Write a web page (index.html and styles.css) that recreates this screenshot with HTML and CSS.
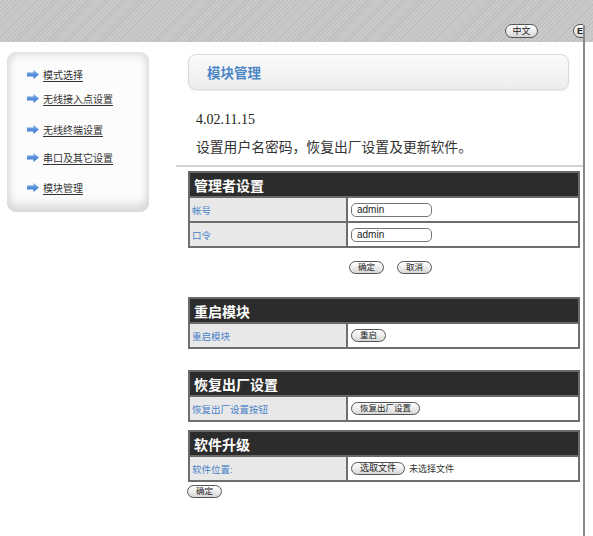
FILE: index.html
```html
<!DOCTYPE html>
<html lang="zh-CN">
<head>
<meta charset="utf-8">
<title>模块管理</title>
<link rel="stylesheet" href="styles.css">
</head>
<body>
<div class="page">
  <header class="topbar">
    <div class="langs">
      <button class="pill lang">中文</button>
      <button class="pill lang wide">En</button>
    </div>
  </header>
  <div class="layout">
    <aside class="side">
      <svg class="defs" width="0" height="0" aria-hidden="true">
        <defs>
          <linearGradient id="arrowGrad" x1="0" y1="0" x2="0" y2="1">
            <stop offset="0" stop-color="#86b6ee"/>
            <stop offset="1" stop-color="#2c6cc8"/>
          </linearGradient>
        </defs>
      </svg>
      <nav class="sidebox">
        <a class="navlink n1" href="#"><svg class="arrow" width="12" height="9" viewBox="0 0 12 9"><path d="M0 2.5H6.5V0L12 4.5 6.5 9V6.5H0Z" fill="url(#arrowGrad)"/></svg><span>模式选择</span></a>
        <a class="navlink n2" href="#"><svg class="arrow" width="12" height="9" viewBox="0 0 12 9"><path d="M0 2.5H6.5V0L12 4.5 6.5 9V6.5H0Z" fill="url(#arrowGrad)"/></svg><span>无线接入点设置</span></a>
        <a class="navlink n3" href="#"><svg class="arrow" width="12" height="9" viewBox="0 0 12 9"><path d="M0 2.5H6.5V0L12 4.5 6.5 9V6.5H0Z" fill="url(#arrowGrad)"/></svg><span>无线终端设置</span></a>
        <a class="navlink n4" href="#"><svg class="arrow" width="12" height="9" viewBox="0 0 12 9"><path d="M0 2.5H6.5V0L12 4.5 6.5 9V6.5H0Z" fill="url(#arrowGrad)"/></svg><span>串口及其它设置</span></a>
        <a class="navlink n5" href="#"><svg class="arrow" width="12" height="9" viewBox="0 0 12 9"><path d="M0 2.5H6.5V0L12 4.5 6.5 9V6.5H0Z" fill="url(#arrowGrad)"/></svg><span>模块管理</span></a>
      </nav>
    </aside>
    <main class="main">
      <div class="titlebox">模块管理</div>
      <p class="version">4.02.11.15</p>
      <p class="desc">设置用户名密码，恢复出厂设置及更新软件。</p>
      <hr class="sep">

      <table class="cfg first">
        <tr><th colspan="2">管理者设置</th></tr>
        <tr><td class="lbl">帐号</td><td class="val"><input class="txt" type="text" value="admin"></td></tr>
        <tr><td class="lbl">口令</td><td class="val"><input class="txt" type="text" value="admin"></td></tr>
      </table>
      <div class="actions">
        <button class="pill">确定</button>
        <button class="pill">取消</button>
      </div>

      <table class="cfg reboot">
        <tr><th colspan="2">重启模块</th></tr>
        <tr><td class="lbl">重启模块</td><td class="val"><button class="pill">重启</button></td></tr>
      </table>

      <table class="cfg factory">
        <tr><th colspan="2">恢复出厂设置</th></tr>
        <tr><td class="lbl">恢复出厂设置按钮</td><td class="val"><button class="pill">恢复出厂设置</button></td></tr>
      </table>

      <table class="cfg upgrade">
        <tr><th colspan="2">软件升级</th></tr>
        <tr><td class="lbl">软件位置:</td><td class="val"><span class="file"><button class="pill filebtn">选取文件</button><span class="nofile">未选择文件</span></span></td></tr>
      </table>
      <div class="actions left">
        <button class="pill">确定</button>
      </div>
    </main>
  </div>
  <div class="frame-line"></div>
</div>
</body>
</html>
```

FILE: styles.css
```css
html, body {
  margin: 0;
  padding: 0;
}

body {
  font-family: "Liberation Sans", "Noto Sans CJK SC", sans-serif;
  color: #333;
  background: #fff;
  overflow: hidden;
}

.page {
  position: relative;
  width: 593px;
  height: 536px;
  overflow: hidden;
}

.topbar {
  height: 42px;
  box-sizing: border-box;
  padding: 24px 10px 0 0;
  display: flex;
  justify-content: flex-end;
  align-items: flex-start;
  background-color: #c6c6c6;
  background-image: repeating-linear-gradient(135deg, #cacaca 0 2px, #bdbdbd 2px 3px);
}

.langs {
  display: flex;
  gap: 35px;
  width: 78px;
  overflow: hidden;
}

.pill {
  margin: 0;
  height: 13px;
  box-sizing: border-box;
  padding: 0 8px;
  border: 1px solid #555;
  border-radius: 7px;
  background: linear-gradient(#ffffff, #e9e9e9 60%, #d6d6d6);
  font-family: "Liberation Sans", "Noto Sans CJK SC", sans-serif;
  font-size: 8.5px;
  line-height: 11px;
  color: #222;
  white-space: nowrap;
  flex: none;
  cursor: pointer;
}

.lang {
  width: 33px;
  height: 14px;
  padding: 0;
  text-align: center;
  font-size: 9px;
  line-height: 12px;
}

.lang.wide {
  width: 33px;
  padding: 0 0 0 3px;
  text-align: left;
  font-weight: bold;
}

.layout {
  display: grid;
  grid-template-columns: 176px 1fr;
}

.side {
  padding: 10px 0 0 7px;
}

.defs {
  position: absolute;
}

.sidebox {
  width: 142px;
  height: 160px;
  box-sizing: border-box;
  border-radius: 9px;
  background: #fcfcfc;
  box-shadow: inset 0 0 9px 2px #d6d6d6, inset 0 -12px 10px -4px #e0e0e0;
  padding: 9px 0 0 20px;
  display: flex;
  flex-direction: column;
}

.navlink {
  display: flex;
  align-items: center;
  gap: 4px;
  height: 26px;
  font-size: 10px;
  color: #333;
  text-decoration: none;
}

.navlink.n2 {
  margin-top: -2px;
}

.navlink.n3 {
  margin-top: 5px;
}

.navlink.n4 {
  margin-top: 2px;
}

.navlink.n5 {
  margin-top: 4px;
}

.navlink span {
  text-decoration: underline;
  text-underline-offset: 2px;
}

.arrow {
  flex: none;
}

.main {
  padding: 12px 0 0 12px;
}

.titlebox {
  width: 381px;
  height: 36px;
  box-sizing: border-box;
  border: 1px solid #dadada;
  border-radius: 8px;
  background: linear-gradient(#fbfbfb, #ededed);
  box-shadow: 0 1px 2px rgba(0, 0, 0, 0.08);
  padding-left: 18px;
  display: flex;
  align-items: center;
  color: #4b86c6;
  font-size: 13.5px;
  font-weight: bold;
}

.version {
  margin: 21px 0 0 8px;
  font-family: "Liberation Serif", serif;
  font-size: 14px;
  line-height: 18px;
  color: #222;
}

.desc {
  margin: 9px 0 0 8px;
  font-size: 13.8px;
  line-height: 20px;
  color: #333;
}

.sep {
  margin: 7px 0 0 -12px;
  width: 407px;
  height: 2px;
  border: 0;
  background: #d2d2d2;
}

.cfg {
  width: 392px;
  border-collapse: collapse;
}

.cfg th {
  height: 23px;
  padding: 0 0 0 4px;
  border: 2px solid #6a6a6a;
  background: #2c2c2c;
  color: #fff;
  text-align: left;
  font-size: 14px;
  font-weight: bold;
}

.cfg td {
  height: 23px;
  padding: 0;
  border: 2px solid #6e6e6e;
}

.cfg .lbl {
  width: 154px;
  padding-left: 2px;
  background: #e8e8e8;
  color: #4a82c8;
  font-size: 9.5px;
}

.cfg .val {
  padding-left: 3px;
  background: #fff;
}

.first {
  margin-top: 4px;
}

.reboot {
  margin-top: 23px;
}

.factory {
  margin-top: 21px;
}

.upgrade {
  margin-top: 8px;
}

.txt {
  display: block;
  width: 81px;
  height: 14px;
  box-sizing: border-box;
  margin: 0;
  padding: 0 5px;
  border: 1px solid #777;
  border-radius: 5px;
  font-family: "Liberation Sans", sans-serif;
  font-size: 10px;
  color: #222;
  background: #fff;
}

.val .pill {
  display: block;
}

.file {
  display: flex;
  align-items: center;
  gap: 4px;
}

.filebtn {
  font-size: 9px;
}

.nofile {
  font-size: 9px;
  color: #333;
}

.actions {
  display: flex;
  justify-content: center;
  gap: 13px;
  margin-top: 13px;
}

.actions.left {
  justify-content: flex-start;
  margin: 3px 0 0 -1px;
}

.frame-line {
  position: absolute;
  left: 583px;
  top: 25px;
  bottom: 0;
  width: 2px;
  background: #8a8a8a;
}
```
